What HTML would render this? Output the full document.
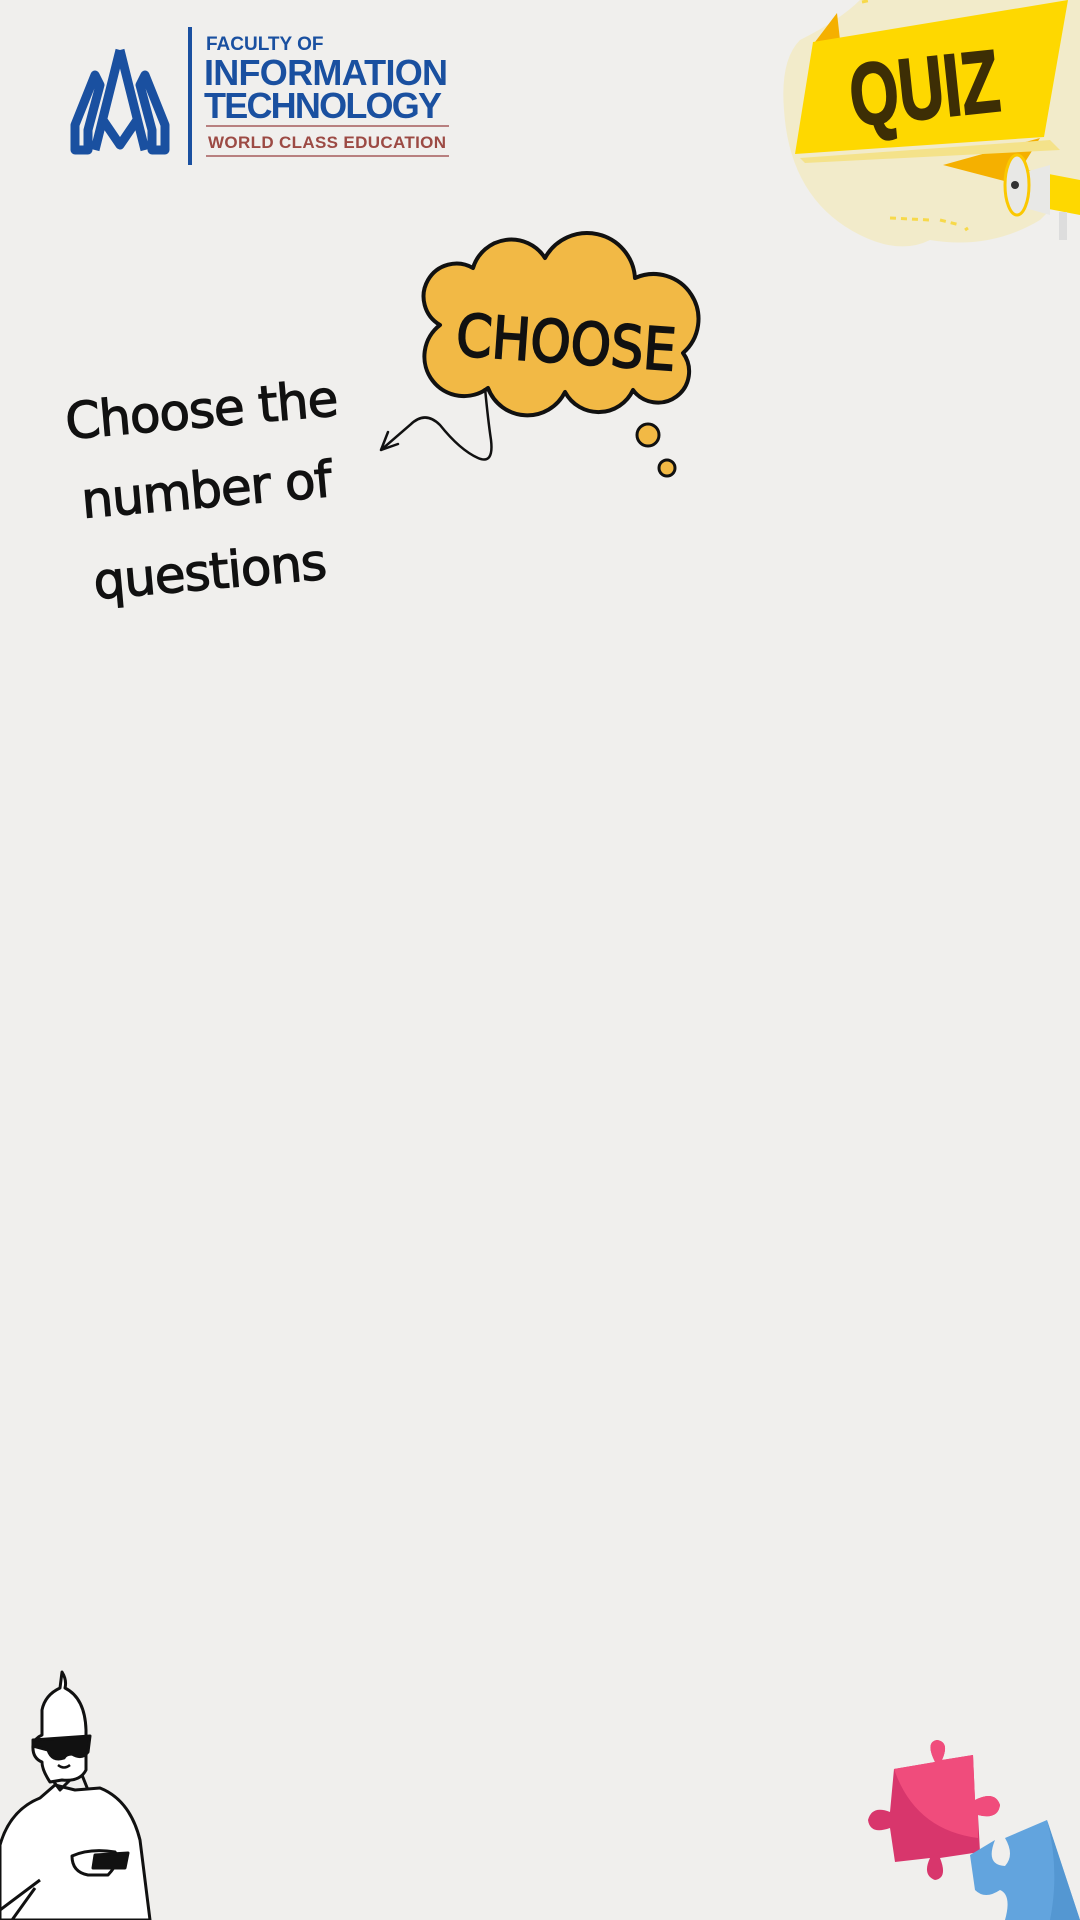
<!DOCTYPE html>
<html><head><meta charset="utf-8"><style>
html,body{margin:0;padding:0}
body{width:1080px;height:1920px;background:#f0efed;position:relative;overflow:hidden;font-family:"Liberation Sans",sans-serif}
.abs{position:absolute}
.hand{font-family:"DejaVu Sans","Liberation Sans",sans-serif;color:#111;font-size:50px;white-space:nowrap;letter-spacing:-1px;-webkit-text-stroke:1.2px #111}
</style></head><body>

<!-- logo -->
<svg class="abs" style="left:0;top:0" width="470" height="180">
  <g fill="none" stroke="#1a50a0" stroke-width="9" stroke-linejoin="round">
    <path d="M75 150 L75 125 L95 75 L100 85 L88 130 L88 150 Z"/>
    <path d="M120 50 L95 150 M120 50 L145 150"/>
    <path d="M103 120 L120 145 L137 120"/>
    <path d="M165 150 L165 125 L145 75 L140 85 L152 130 L152 150 Z"/>
  </g>
  <rect x="188" y="27" width="4" height="138" fill="#1a50a0"/>
  <text x="206" y="50" font-family="Liberation Sans" font-weight="bold" font-size="19" fill="#1a50a0">FACULTY OF</text>
  <text x="204" y="85" font-family="Liberation Sans" font-weight="bold" font-size="36" fill="#1a50a0" textLength="244">INFORMATION</text>
  <text x="204" y="118" font-family="Liberation Sans" font-weight="bold" font-size="36" fill="#1a50a0" textLength="238">TECHNOLOGY</text>
  <rect x="206" y="125" width="243" height="2" fill="#b88080"/>
  <text x="208" y="148" font-family="Liberation Sans" font-weight="bold" font-size="17" fill="#9c4a44" textLength="238">WORLD CLASS EDUCATION</text>
  <rect x="206" y="155" width="243" height="2" fill="#b88080"/>
</svg>

<!-- quiz banner -->
<svg class="abs" style="left:760px;top:0" width="320" height="260" viewBox="760 0 320 260">
  <path d="M800 40 Q780 60 784 110 Q790 200 860 235 Q900 255 930 240 Q990 250 1040 220 L1080 180 L1080 0 L860 0 Q840 20 800 40Z" fill="#f2ebca"/>
  <path d="M862 2 L872 0 M940 220 L960 225 M890 218 L930 220 M968 228 L965 230" stroke="#f7d94a" stroke-width="3" stroke-dasharray="6 5"/>
  <path d="M815 42 L837 13 L840 40Z" fill="#f5b000"/>
  <path d="M943 165 L1040 138 L1012 183Z" fill="#f5b000"/>
  <path d="M800 158 L1050 140 L1060 150 L805 163Z" fill="#f4e28a"/>
  <path d="M813 42 L1068 0 L1044 137 L795 154Z" fill="#fed800"/>
  <text x="0" y="0" transform="translate(853 126) rotate(-6)" font-family="Liberation Sans" font-weight="bold" font-size="88" fill="#3d2e05" stroke="#3d2e05" stroke-width="2" textLength="150" lengthAdjust="spacingAndGlyphs">QUIZ</text>
  <path d="M1028 170 L1080 180 L1080 215 L1028 205Z" fill="#fed800"/>
  <path d="M1015 175 L1050 165 L1050 215 L1015 205Z" fill="#e8e8e6"/>
  <ellipse cx="1017" cy="185" rx="12" ry="30" fill="#e8e8e6" stroke="#fbc800" stroke-width="3"/>
  <circle cx="1015" cy="185" r="4" fill="#333"/>
  <rect x="1059" y="212" width="8" height="28" fill="#ddd"/>
</svg>

<!-- cloud -->
<svg class="abs" style="left:0;top:0" width="1080" height="600">
  <path d="M440 325 A30 30 0 0 1 473 268 A40 40 0 0 1 545 258 A48 48 0 0 1 635 278 A45 45 0 0 1 683 353 A30 30 0 0 1 633 390 A38 38 0 0 1 565 392 A42 42 0 0 1 488 388 A38 38 0 0 1 440 325Z" fill="#f2b945" stroke="#111" stroke-width="4" stroke-linejoin="round"/>
  <path d="M485 388 Q488 420 491 440 Q494 465 478 458 Q460 450 440 425 Q425 410 410 425 L381 450" fill="none" stroke="#111" stroke-width="2.5"/>
  <path d="M381 450 L388 432 M381 450 L398 444" stroke="#111" stroke-width="2.5" fill="none" stroke-linecap="round"/>
  <circle cx="648" cy="435" r="11" fill="#f2b945" stroke="#111" stroke-width="3"/>
  <circle cx="667" cy="468" r="8" fill="#f2b945" stroke="#111" stroke-width="3"/>
  <text transform="translate(455 355) rotate(4)" font-family="DejaVu Sans" font-size="58" fill="#111" stroke="#111" stroke-width="2" textLength="220" lengthAdjust="spacingAndGlyphs">CHOOSE</text>
</svg>

<div class="abs hand" style="left:68px;top:393px;transform:rotate(-5deg);transform-origin:left bottom">Choose the</div>
<div class="abs hand" style="left:84px;top:472px;transform:rotate(-5deg);transform-origin:left bottom">number of</div>
<div class="abs hand" style="left:96px;top:553px;transform:rotate(-5deg);transform-origin:left bottom">questions</div>

<!-- character -->
<svg class="abs" style="left:0;top:1670px" width="160" height="250" viewBox="0 0 160 250">
  <g stroke="#111" stroke-width="3" fill="#fff" stroke-linejoin="round">
    <path d="M0 250 L0 175 Q10 140 40 128 L55 115 L75 120 L100 118 Q130 130 140 170 L150 250Z"/>
    <path d="M45 100 L60 120 L80 100 L88 120" fill="none"/>
    <path d="M42 40 Q45 25 60 18 L62 2 Q67 10 65 18 Q85 28 86 60 L86 100 Q80 112 62 110 L50 112 Q42 100 42 92 Q32 88 33 75 Q35 68 42 65Z"/>
    <path d="M33 70 L90 66 L88 82 Q82 90 72 84 Q66 84 64 88 Q52 92 48 80 L33 76Z" fill="#111"/>
    <path d="M0 240 L40 210 M12 250 L35 218" fill="none"/>
    <path d="M72 186 Q90 178 115 182 Q122 190 108 205 L88 205 Q72 202 72 186Z"/>
    <path d="M95 185 L128 183 L125 198 L93 198Z" fill="#111"/>
  </g>
  <path d="M58 95 Q64 100 70 95" stroke="#111" stroke-width="2.5" fill="none"/>
</svg>

<!-- puzzles -->
<svg class="abs" style="left:860px;top:1735px" width="220" height="185" viewBox="860 1735 220 185">
  <path d="M894 1769 L935 1762 Q925 1742 937 1740 Q950 1742 942 1760 L973 1755 L975 1800 Q995 1790 1000 1805 Q998 1820 978 1815 L980 1852 L940 1858 Q948 1878 935 1880 Q922 1875 930 1858 L895 1862 L890 1828 Q870 1835 868 1820 Q872 1805 890 1812Z" fill="#d8366c"/>
  <path d="M894 1769 L935 1762 Q925 1742 937 1740 Q950 1742 942 1760 L973 1755 L975 1800 Q995 1790 1000 1805 Q998 1820 978 1815 L978 1838 Q915 1830 894 1769Z" fill="#f04c7c"/>
  <path d="M970 1855 L995 1840 Q985 1865 1005 1866 Q1015 1855 1005 1838 L1047 1820 L1080 1920 L1005 1920 Q1012 1895 1000 1890 Q985 1900 975 1890Z" fill="#62a4de"/>
  <path d="M1047 1820 L1080 1920 L1050 1920 Q1060 1870 1047 1820Z" fill="#5497d2"/>
</svg>

</body></html>
